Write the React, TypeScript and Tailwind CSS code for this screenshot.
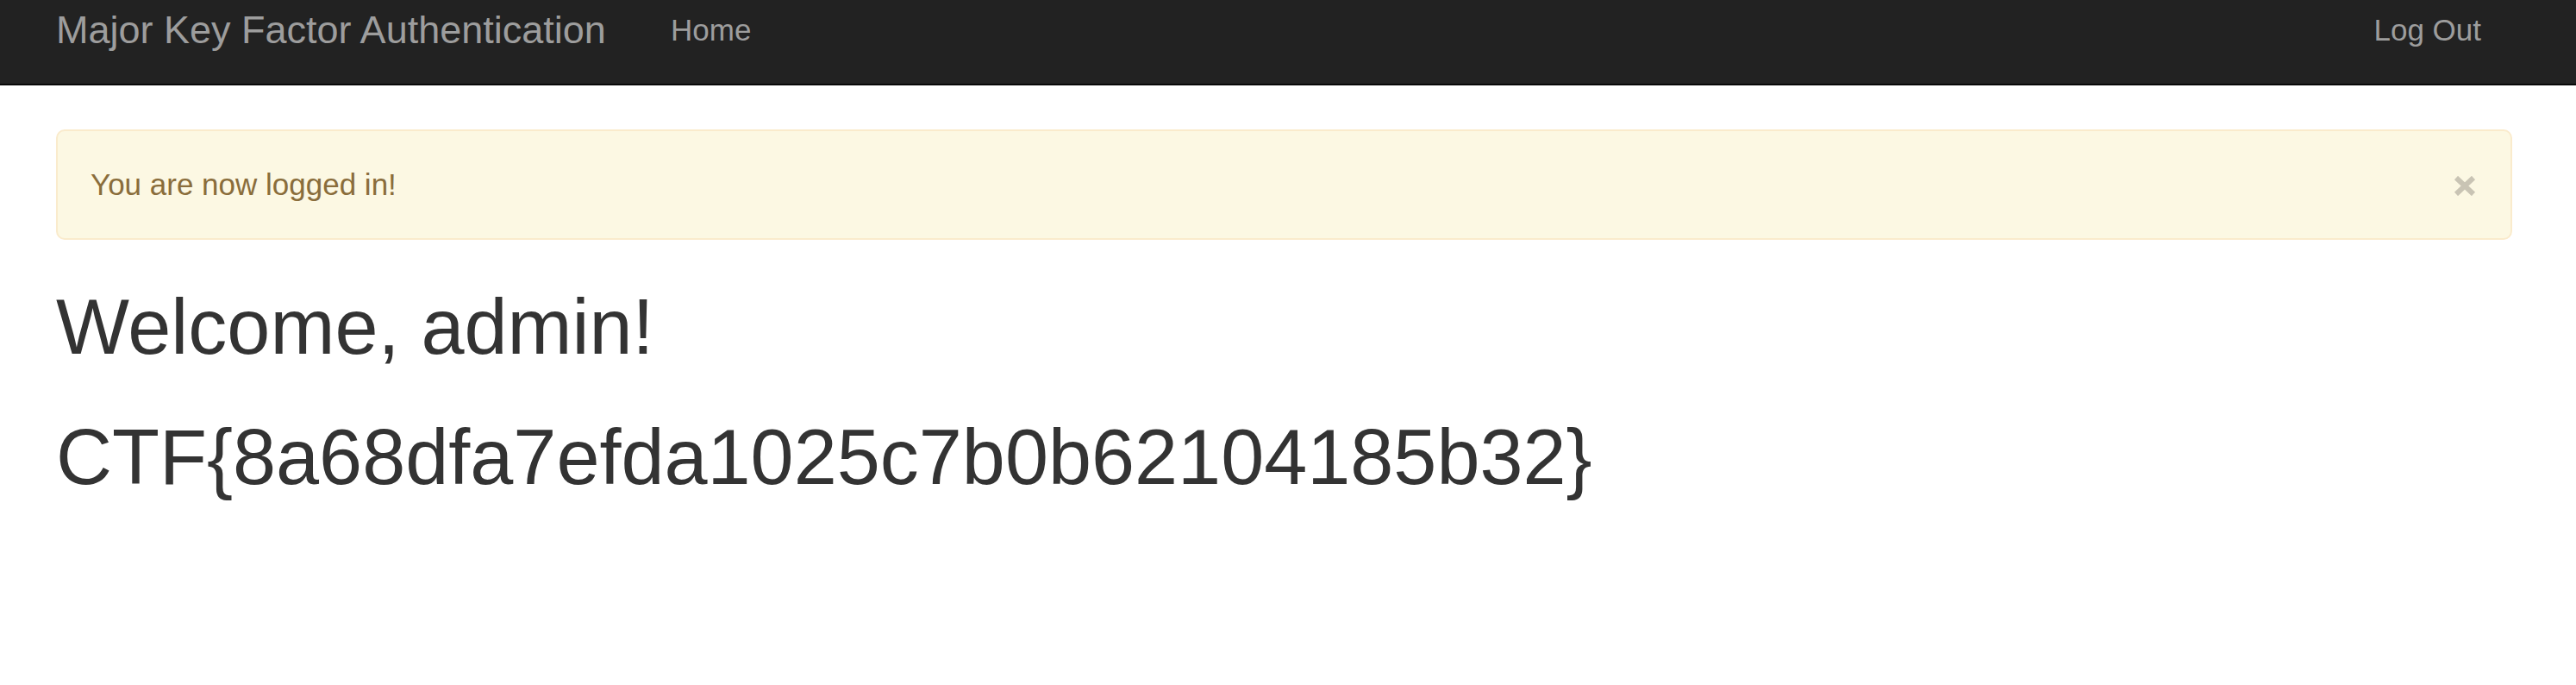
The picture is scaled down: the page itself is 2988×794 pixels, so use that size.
export default function App() {
  return (
    <div className="min-h-screen bg-white font-['Liberation_Sans',Arial,sans-serif]">
      <nav className="flex h-[99px] items-start border-b-2 border-[#080808] bg-[#222222] pl-[65px] pr-[110px]">
        <a className="w-[713px] shrink-0 text-[45px] leading-[70px] text-[#9d9d9d]">
          Major Key Factor Authentication
        </a>
        <a className="text-[35px] leading-[70px] text-[#9d9d9d]">Home</a>
        <a className="ml-auto text-[35px] leading-[70px] text-[#9d9d9d]">Log Out</a>
      </nav>

      <main className="pl-[65px] pr-[74px] pt-[51px]">
        <div className="flex items-center rounded-[10px] border-2 border-[#faebcc] bg-[#fcf8e3] py-[37px] pl-[38px] pr-[40px] text-[#8a6d3b]">
          <span className="flex-1 text-[35px] leading-[50px]">You are now logged in!</span>
          <svg width="26" height="23" viewBox="0 0 26 23" className="mb-[-2px]">
            <path d="M3 2 L23 21 M23 2 L3 21" stroke="#c9c4b4" strokeWidth="6" />
          </svg>
        </div>

        <h1 className="mt-[52px] text-[90px] leading-[99px] text-[#333333]">Welcome, admin!</h1>
        <h1 className="mt-[52px] text-[90px] leading-[99px] text-[#333333]">
          CTF{'{'}8a68dfa7efda1025c7b0b62104185b32{'}'}
        </h1>
      </main>
    </div>
  );
}
